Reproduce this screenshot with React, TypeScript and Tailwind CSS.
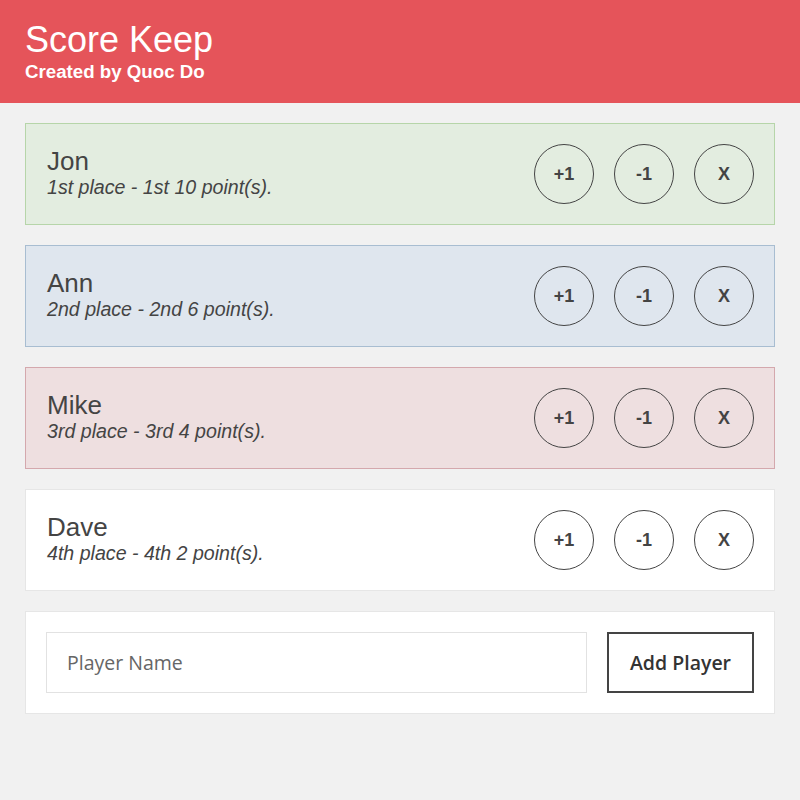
import React from "react";

const players = [
  { name: "Jon", line: "1st place - 1st 10 point(s).", cls: "bg-[#e3ede0] border-[#b6d5a9]" },
  { name: "Ann", line: "2nd place - 2nd 6 point(s).", cls: "bg-[#dfe6ee] border-[#a8bdd1]" },
  { name: "Mike", line: "3rd place - 3rd 4 point(s).", cls: "bg-[#eedfe0] border-[#d4a8ad]" },
  { name: "Dave", line: "4th place - 4th 2 point(s).", cls: "bg-white border-[#e6e6e6]" },
];

function Circle({ label }: { label: string }) {
  return (
    <button className="w-[60px] h-[60px] rounded-full border-[1.5px] border-[#444] flex items-center justify-center text-[18px] font-bold text-[#444] bg-transparent">
      {label}
    </button>
  );
}

export default function App() {
  return (
    <div className="min-h-[800px] bg-[#f1f1f1] text-[#444]" style={{ fontFamily: '"Liberation Sans", Arial, sans-serif' }}>
      <header className="bg-[#e5545a] h-[103px] px-[25px] pt-[20px] text-white">
        <h1 className="text-[36px] leading-[40px]">Score Keep</h1>
        <p className="text-[18.7px] font-bold leading-[22px] mt-[1px]">Created by Quoc Do</p>
      </header>
      <main className="px-[25px] pt-[20px] flex flex-col gap-[20px]">
        {players.map((p) => (
          <div key={p.name} className={`border ${p.cls} h-[102px] flex items-center justify-between pl-[21px] pr-[20px]`}>
            <div className="-mt-[4px]">
              <div className="text-[26px] leading-[30px]">{p.name}</div>
              <div className="text-[19.6px] italic leading-[22px]">{p.line}</div>
            </div>
            <div className="flex gap-[20px]">
              <Circle label="+1" />
              <Circle label="-1" />
              <Circle label="X" />
            </div>
          </div>
        ))}
        <div className="bg-white border border-[#e6e6e6] h-[103px] flex items-center px-[20px] gap-[20px]">
          <input
            placeholder="Player Name"
            className="flex-1 h-[61px] border border-[#e2e2e2] px-[20px] text-[19.5px] text-[#444] placeholder:text-[#666] outline-none"
            style={{ fontFamily: '"Open Sans", sans-serif' }}
          />
          <button
            className="w-[147px] h-[61px] border-2 border-[#444] text-[19.5px] font-semibold text-[#333] bg-white"
            style={{ fontFamily: '"Open Sans", sans-serif' }}
          >
            Add Player
          </button>
        </div>
      </main>
    </div>
  );
}
